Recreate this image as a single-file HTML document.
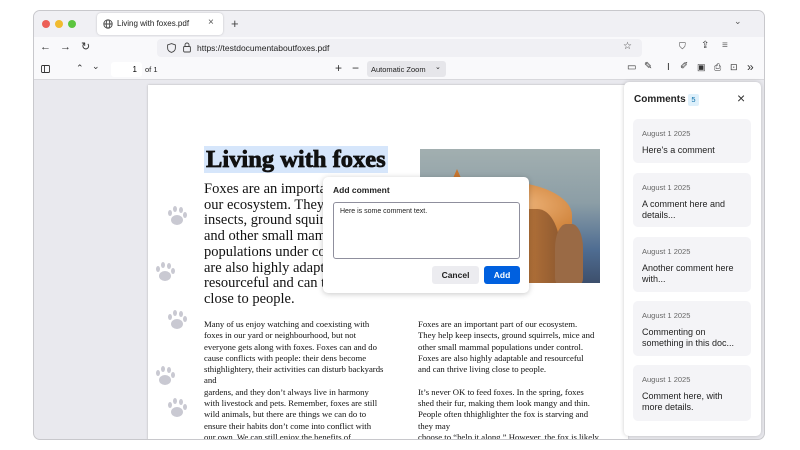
<!DOCTYPE html>
<html><head><meta charset="utf-8"><style>
*{box-sizing:border-box;margin:0;padding:0}
body{width:800px;height:450px;background:#fff;position:relative;overflow:hidden;font-family:"Liberation Sans",sans-serif}
.win{position:absolute;left:33px;top:10px;width:732px;height:430px;border:1px solid #c8c8cc;border-radius:7px;overflow:hidden;background:#e9e9ee}
.abs{position:absolute}
.tabbar{left:0;top:0;width:732px;height:26px;background:#f0f0f4}
.nav{left:0;top:26px;width:732px;height:22px;background:#f9f9fb}
.tool{left:0;top:48px;width:732px;height:21px;background:#f9f9fb;border-bottom:1px solid #d8d8dc}
.ic{position:absolute;font-size:11px;color:#333}
.serif{font-family:"Liberation Serif",serif;color:#111}
.card{position:absolute;left:9px;width:118px;background:#f4f4f7;border-radius:5px;font-size:9px;color:#222;padding:9px 9px;line-height:11.5px}
.card .d{font-size:7.5px;color:#666;margin-bottom:5px}
.paw{position:absolute;width:22px;height:22px}
</style></head><body>
<div class="win">
 <div class="abs tabbar">
  <div class="abs" style="left:8px;top:9px;width:8px;height:8px;border-radius:50%;background:#ec5f57"></div>
  <div class="abs" style="left:21px;top:9px;width:8px;height:8px;border-radius:50%;background:#f1bb2f"></div>
  <div class="abs" style="left:34px;top:9px;width:8px;height:8px;border-radius:50%;background:#5cc53f"></div>
  <div class="abs" style="left:63px;top:2px;width:126px;height:22px;background:#fff;border-radius:4px;box-shadow:0 0 2px rgba(0,0,0,.2)">
   <svg class="abs" style="left:6px;top:6px" width="10" height="10" viewBox="0 0 10 10" fill="none" stroke="#444" stroke-width=".9"><circle cx="5" cy="5" r="4.2"/><ellipse cx="5" cy="5" rx="1.8" ry="4.2"/><path d="M1 5h8"/></svg>
   <span class="abs" style="left:20px;top:6px;font-size:8px;color:#222">Living with foxes.pdf</span>
   <span class="abs" style="left:111px;top:4px;font-size:10px;color:#555">×</span>
  </div>
  <span class="ic" style="left:197px;top:5px;font-size:13px;color:#444">+</span>
  <span class="ic" style="left:700px;top:5px;font-size:9px;color:#555">⌄</span>
 </div>
 <div class="abs nav">
  <span class="ic" style="left:6px;top:4px">←</span><span class="ic" style="left:26px;top:4px">→</span><span class="ic" style="left:47px;top:3px">↻</span>
  <div class="abs" style="left:123px;top:2px;width:485px;height:18px;background:#f0f0f4;border-radius:4px">
   <svg class="abs" style="left:10px;top:4px" width="9" height="10" viewBox="0 0 9 10" fill="none" stroke="#444" stroke-width=".9"><path d="M4.5 .6L8.4 2v3c0 2.4-2 3.8-3.9 4.4C2.6 8.8.6 7.4.6 5V2z"/></svg>
   <svg class="abs" style="left:26px;top:3px" width="8" height="11" viewBox="0 0 8 11" fill="none" stroke="#444" stroke-width=".9"><rect x=".6" y="4.5" width="6.8" height="5.5" rx="1"/><path d="M2 4.5V3a2 2 0 0 1 4 0v1.5"/></svg>
   <span class="abs" style="left:40px;top:4px;font-size:8.5px;color:#222">https://testdocumentaboutfoxes.pdf</span>
   <span class="abs" style="left:466px;top:2px;font-size:10px;color:#444">☆</span>
  </div>
  <span class="ic" style="left:645px;top:4px;font-size:9px">⛉</span><span class="ic" style="left:667px;top:3px;font-size:10px">⇪</span><span class="ic" style="left:688px;top:3px;font-size:10px;color:#666">≡</span>
 </div>
 <div class="abs tool">
  <svg class="abs" style="left:7px;top:6px" width="9" height="8" viewBox="0 0 9 8" fill="none" stroke="#333" stroke-width=".9"><rect x=".5" y=".5" width="8" height="7" rx="1"/><path d="M3.5 .5v7"/></svg>
  <span class="ic" style="left:42px;top:4px;font-size:9px">⌃</span><span class="ic" style="left:58px;top:2px;font-size:9px">⌄</span>
  <div class="abs" style="left:77px;top:3px;width:31px;height:15px;background:#fff;border-radius:3px;font-size:8px;text-align:right;padding:3px 5px 0 0">1</div>
  <span class="abs" style="left:111px;top:6px;font-size:7.5px;color:#222">of 1</span>
  <span class="ic" style="left:301px;top:2px;font-size:12px">+</span><span class="ic" style="left:318px;top:2px;font-size:12px">−</span>
  <div class="abs" style="left:333px;top:2px;width:79px;height:16px;background:#e6e6ea;border-radius:3px;font-size:7.5px;color:#222;padding:4px 0 0 4px">Automatic Zoom<span style="position:absolute;left:68px;top:2px;font-size:7px">⌄</span></div>
  <span class="ic" style="left:593px;top:3px;font-size:10px">▭</span><span class="ic" style="left:610px;top:2px;font-size:10px">✎</span><span class="ic" style="left:633px;top:3px;font-size:10px">I</span><span class="ic" style="left:646px;top:2px;font-size:10px">✐</span><span class="ic" style="left:663px;top:3px;font-size:9px">▣</span><span class="ic" style="left:680px;top:3px;font-size:9px">⎙</span><span class="ic" style="left:696px;top:3px;font-size:9px">⊡</span><span class="ic" style="left:713px;top:1px;font-size:12px">»</span>
 </div>
 <!-- page -->
 <div class="abs" style="left:114px;top:74px;width:480px;height:360px;background:#fff;box-shadow:0 0 2px rgba(0,0,0,.25)">
  <div class="abs serif" style="left:56px;top:61px;background:#d6e6fb;font-size:24.5px;font-weight:700;padding:0 2px;line-height:27px;-webkit-text-stroke:.8px #111">Living with foxes</div>
  <div class="abs serif" style="left:56px;top:97px;width:230px;font-size:14.5px;line-height:15.7px;white-space:nowrap">Foxes are an important part of<br>our ecosystem. They help keep<br>insects, ground squirrels, mice<br>and other small mammal<br>populations under control. Foxes<br>are also highly adaptable and<br>resourceful and can thrive living<br>close to people.</div>
  <div class="abs" style="left:272px;top:64px;width:180px;height:134px;overflow:hidden;background:linear-gradient(180deg,#a2afb0 0%,#8c9ea6 40%,#4f6d92 75%,#3d4f6c 100%)">
   <div class="abs" style="left:30px;top:20px;width:0;height:0;border-left:7px solid transparent;border-right:7px solid transparent;border-bottom:16px solid #c8762f"></div>
   <div class="abs" style="left:22px;top:32px;width:130px;height:60px;border-radius:45% 60% 30% 20%;background:radial-gradient(ellipse at 60% 40%,#eeb47a,#d0843c 60%,#a85f25)"></div>
   <div class="abs" style="left:95px;top:60px;width:45px;height:80px;border-radius:30% 50% 10% 10%;background:linear-gradient(90deg,#c07a3c,#8f5a30)"></div>
   <div class="abs" style="left:135px;top:75px;width:28px;height:60px;border-radius:40% 40% 10% 10%;background:#9a6a45"></div>
  </div>
  <div class="abs serif" style="left:56px;top:234px;width:200px;font-size:8.7px;line-height:11.3px;white-space:nowrap">Many of us enjoy watching and coexisting with<br>foxes in our yard or neighbourhood, but not<br>everyone gets along with foxes. Foxes can and do<br>cause conflicts with people: their dens become<br>sthighlightery, their activities can disturb backyards<br>and<br>gardens, and they don’t always live in harmony<br>with livestock and pets. Remember, foxes are still<br>wild animals, but there are things we can do to<br>ensure their habits don’t come into conflict with<br>our own. We can still enjoy the benefits of</div>
  <div class="abs serif" style="left:270px;top:234px;width:200px;font-size:8.7px;line-height:11.3px;white-space:nowrap">Foxes are an important part of our ecosystem.<br>They help keep insects, ground squirrels, mice and<br>other small mammal populations under control.<br>Foxes are also highly adaptable and resourceful<br>and can thrive living close to people.<br><br>It’s never OK to feed foxes. In the spring, foxes<br>shed their fur, making them look mangy and thin.<br>People often thhighlighter the fox is starving and<br>they may<br>choose to “help it along.” However, the fox is likely</div>
  <svg class="paw" style="left:18px;top:120px" viewBox="0 0 22 22" fill="#c9c9d2"><ellipse cx="11" cy="15" rx="6" ry="5"/><ellipse cx="4" cy="8" rx="2" ry="3"/><ellipse cx="9" cy="4" rx="2" ry="3"/><ellipse cx="15" cy="5" rx="2" ry="3"/><ellipse cx="19" cy="10" rx="2" ry="3"/></svg>
  <svg class="paw" style="left:6px;top:176px" viewBox="0 0 22 22" fill="#c9c9d2"><ellipse cx="11" cy="15" rx="6" ry="5"/><ellipse cx="4" cy="8" rx="2" ry="3"/><ellipse cx="9" cy="4" rx="2" ry="3"/><ellipse cx="15" cy="5" rx="2" ry="3"/><ellipse cx="19" cy="10" rx="2" ry="3"/></svg>
  <svg class="paw" style="left:18px;top:224px" viewBox="0 0 22 22" fill="#c9c9d2"><ellipse cx="11" cy="15" rx="6" ry="5"/><ellipse cx="4" cy="8" rx="2" ry="3"/><ellipse cx="9" cy="4" rx="2" ry="3"/><ellipse cx="15" cy="5" rx="2" ry="3"/><ellipse cx="19" cy="10" rx="2" ry="3"/></svg>
  <svg class="paw" style="left:6px;top:280px" viewBox="0 0 22 22" fill="#c9c9d2"><ellipse cx="11" cy="15" rx="6" ry="5"/><ellipse cx="4" cy="8" rx="2" ry="3"/><ellipse cx="9" cy="4" rx="2" ry="3"/><ellipse cx="15" cy="5" rx="2" ry="3"/><ellipse cx="19" cy="10" rx="2" ry="3"/></svg>
  <svg class="paw" style="left:18px;top:312px" viewBox="0 0 22 22" fill="#c9c9d2"><ellipse cx="11" cy="15" rx="6" ry="5"/><ellipse cx="4" cy="8" rx="2" ry="3"/><ellipse cx="9" cy="4" rx="2" ry="3"/><ellipse cx="15" cy="5" rx="2" ry="3"/><ellipse cx="19" cy="10" rx="2" ry="3"/></svg>
 </div>
 <!-- dialog -->
 <div class="abs" style="left:289px;top:166px;width:206px;height:116px;background:#fff;border-radius:5px;box-shadow:0 1px 6px rgba(0,0,0,.22)">
  <span class="abs" style="left:10px;top:8px;font-size:8.5px;font-weight:bold;color:#222">Add comment</span>
  <div class="abs" style="left:10px;top:25px;width:187px;height:57px;border:1px solid #8f8f9d;border-radius:3px;font-size:7px;color:#222;padding:5px 6px">Here is some comment text.</div>
  <div class="abs" style="left:109px;top:89px;width:47px;height:18px;background:#ececf0;border-radius:3px;font-size:8.5px;font-weight:bold;color:#222;text-align:center;line-height:18px">Cancel</div>
  <div class="abs" style="left:161px;top:89px;width:36px;height:18px;background:#0060df;border-radius:3px;font-size:8.5px;font-weight:bold;color:#fff;text-align:center;line-height:18px">Add</div>
 </div>
 <!-- comments -->
 <div class="abs" style="left:590px;top:71px;width:137px;height:354px;background:#fff;border-radius:5px;box-shadow:0 0 4px rgba(0,0,0,.2)">
  <span class="abs" style="left:10px;top:12px;font-size:10px;font-weight:bold;color:#222">Comments</span>
  <span class="abs" style="left:64px;top:12px;width:11px;height:12px;background:#def0fb;border-radius:2px;font-size:7.5px;color:#0a6ea8;text-align:center;line-height:12px">5</span>
  <span class="abs" style="left:113px;top:8px;font-size:14px;color:#333">×</span>
  <div class="card" style="top:37px;height:44px"><div class="d">August 1 2025</div>Here's a comment</div>
  <div class="card" style="top:91px;height:54px"><div class="d">August 1 2025</div>A comment here and details...</div>
  <div class="card" style="top:155px;height:55px"><div class="d">August 1 2025</div>Another comment here with...</div>
  <div class="card" style="top:219px;height:55px"><div class="d">August 1 2025</div>Commenting on something in this doc...</div>
  <div class="card" style="top:283px;height:56px"><div class="d">August 1 2025</div>Comment here, with more details.</div>
 </div>
</div>
</body></html>
